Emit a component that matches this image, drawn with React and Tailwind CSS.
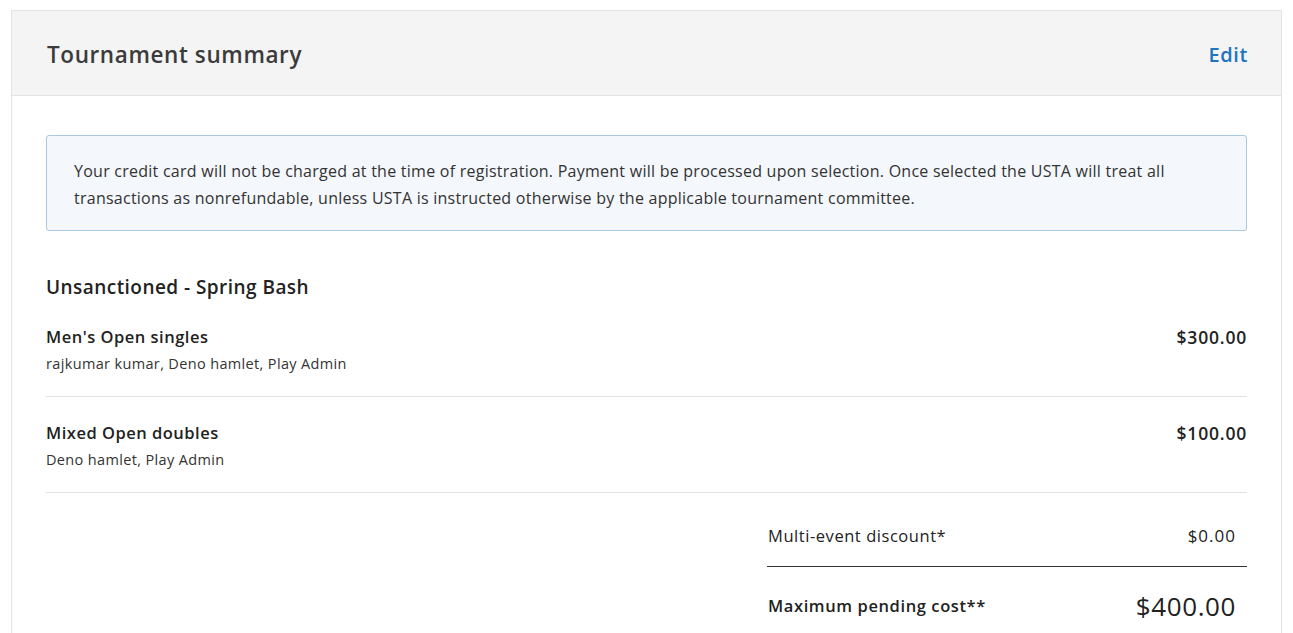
import React from "react";

const events = [
  { name: "Men's Open singles", players: "rajkumar kumar, Deno hamlet, Play Admin", price: "$300.00" },
  { name: "Mixed Open doubles", players: "Deno hamlet, Play Admin", price: "$100.00" },
];

const App = () => {
  return (
    <div className="min-h-screen bg-white pt-[10px] px-[11px] font-['Open_Sans',sans-serif] text-[#222]">
      <div className="border border-[#e3e3e3]">
        <div className="flex items-center justify-between h-[85px] bg-[#f4f4f4] border-b border-[#e3e3e3] pl-[35px] pr-[33px]">
          <h2 className="mt-[4px] text-[22.5px] tracking-[0.6px] font-semibold text-[#3b3b3b]">Tournament summary</h2>
          <button className="mt-[4px] text-[20px] tracking-[0.6px] font-semibold text-[#1f74c0]">Edit</button>
        </div>

        <div className="px-[34px] pt-[39px] pb-12">
          <div className="bg-[#f4f7fb] border border-[#a9c9e2] rounded-[3px] pl-[27px] pr-6 pt-[22px] pb-[18px] text-[16px] tracking-[0.25px] leading-[27px] text-[#333]">
            Your credit card will not be charged at the time of registration. Payment will be processed upon selection. Once selected the USTA will treat all transactions as nonrefundable, unless USTA is instructed otherwise by the applicable tournament committee.
          </div>

          <h3 className="mt-[42px] text-[19px] tracking-[0.45px] leading-[28px] font-semibold">Unsanctioned - Spring Bash</h3>

          {events.map((ev) => (
            <div key={ev.name} className="flex justify-between pt-6 pb-[21px] border-b border-[#e2e2e2]">
              <div>
                <div className="text-[16.5px] tracking-[0.5px] leading-[24px] font-semibold">{ev.name}</div>
                <div className="mt-1 text-[14.5px] tracking-[0.35px] leading-[22px] text-[#333]">{ev.players}</div>
              </div>
              <div className="text-[17.5px] tracking-[0.8px] leading-[24px] font-semibold">{ev.price}</div>
            </div>
          ))}

          <div className="flex justify-end">
            <div className="w-[480px]">
              <div className="flex justify-between pt-[31px] pb-[18px] pl-[1px] pr-[11px] border-b border-[#333] text-[16.5px] leading-[24px]">
                <span className="tracking-[0.55px]">Multi-event discount*</span>
                <span className="text-[17px] tracking-[1px]">$0.00</span>
              </div>
              <div className="flex items-center justify-between pt-[23px] pl-[1px] pr-[11px]">
                <span className="text-[16.5px] tracking-[0.6px] font-semibold">Maximum pending cost**</span>
                <span className="text-[26px] tracking-[0.6px] leading-[32px]">$400.00</span>
              </div>
            </div>
          </div>
        </div>
      </div>
    </div>
  );
};

export default App;
